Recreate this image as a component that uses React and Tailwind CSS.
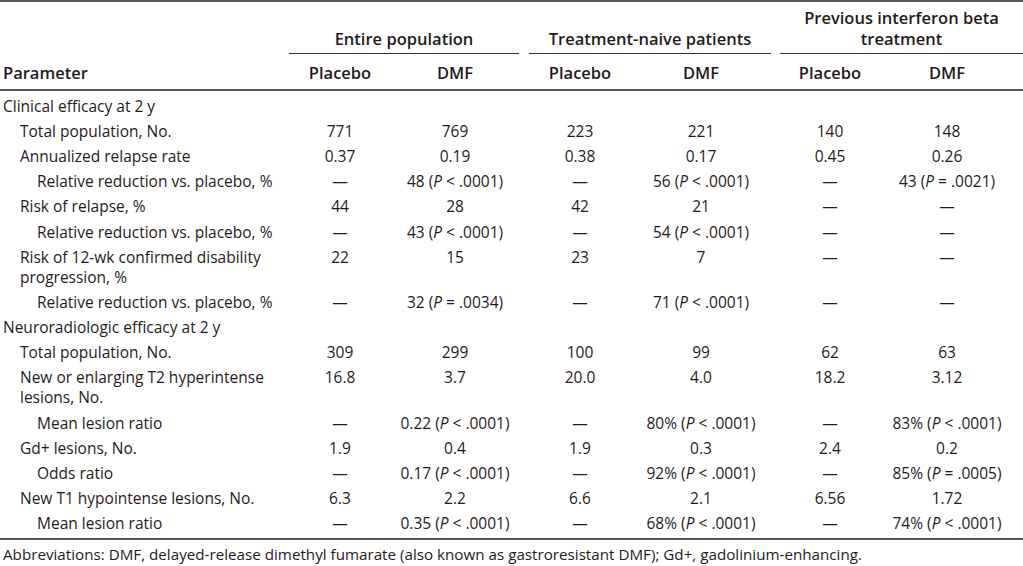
const cols = "grid grid-cols-[289px_102px_128px_10px_102px_140px_9px_100px_143px]"

const P = ({ op, v }) => (
  <>
    (<i>P</i> {op} {v})
  </>
)

const rows = [
  { lvl: 0, p: "Clinical efficacy at 2 y", c: [] },
  { lvl: 1, p: "Total population, No.", c: ["771", "769", "223", "221", "140", "148"] },
  { lvl: 1, p: "Annualized relapse rate", c: ["0.37", "0.19", "0.38", "0.17", "0.45", "0.26"] },
  {
    lvl: 2,
    p: "Relative reduction vs. placebo, %",
    c: ["—", <>48 <P op="<" v=".0001" /></>, "—", <>56 <P op="<" v=".0001" /></>, "—", <>43 <P op="=" v=".0021" /></>],
  },
  { lvl: 1, p: "Risk of relapse, %", c: ["44", "28", "42", "21", "—", "—"] },
  {
    lvl: 2,
    p: "Relative reduction vs. placebo, %",
    c: ["—", <>43 <P op="<" v=".0001" /></>, "—", <>54 <P op="<" v=".0001" /></>, "—", "—"],
  },
  {
    lvl: 1,
    p: <>Risk of 12-wk confirmed disability<br />progression, %</>,
    c: ["22", "15", "23", "7", "—", "—"],
  },
  {
    lvl: 2,
    p: "Relative reduction vs. placebo, %",
    c: ["—", <>32 <P op="=" v=".0034" /></>, "—", <>71 <P op="<" v=".0001" /></>, "—", "—"],
  },
  { lvl: 0, p: "Neuroradiologic efficacy at 2 y", c: [] },
  { lvl: 1, p: "Total population, No.", c: ["309", "299", "100", "99", "62", "63"] },
  {
    lvl: 1,
    p: <>New or enlarging T2 hyperintense<br />lesions, No.</>,
    c: ["16.8", "3.7", "20.0", "4.0", "18.2", "3.12"],
  },
  {
    lvl: 2,
    p: "Mean lesion ratio",
    c: ["—", <>0.22 <P op="<" v=".0001" /></>, "—", <>80% <P op="<" v=".0001" /></>, "—", <>83% <P op="<" v=".0001" /></>],
  },
  { lvl: 1, p: "Gd+ lesions, No.", c: ["1.9", "0.4", "1.9", "0.3", "2.4", "0.2"] },
  {
    lvl: 2,
    p: "Odds ratio",
    c: ["—", <>0.17 <P op="<" v=".0001" /></>, "—", <>92% <P op="<" v=".0001" /></>, "—", <>85% <P op="=" v=".0005" /></>],
  },
  { lvl: 1, p: "New T1 hypointense lesions, No.", c: ["6.3", "2.2", "6.6", "2.1", "6.56", "1.72"] },
  {
    lvl: 2,
    p: "Mean lesion ratio",
    c: ["—", <>0.35 <P op="<" v=".0001" /></>, "—", <>68% <P op="<" v=".0001" /></>, "—", <>74% <P op="<" v=".0001" /></>],
  },
]

const indent = ["pl-[3px]", "pl-[20px]", "pl-[37px]"]

const Row = ({ r }) => {
  const c = r.c
  const cell = "py-[2.6px] text-center whitespace-nowrap"
  return (
    <div className={cols}>
      <div className={`py-[2.6px] ${indent[r.lvl]}`}>{r.p}</div>
      <div className={cell}>{c[0]}</div>
      <div className={cell}>{c[1]}</div>
      <div />
      <div className={cell}>{c[2]}</div>
      <div className={cell}>{c[3]}</div>
      <div />
      <div className={cell}>{c[4]}</div>
      <div className={`${cell} pr-[9px]`}>{c[5]}</div>
    </div>
  )
}

export default function App() {
  const head = "pt-[9px] pb-[6px] text-center"
  return (
    <div className="w-[1023px] h-[566px] bg-white text-[#1f1b1c] text-[15.5px] leading-[20px] font-['Open_Sans','Noto_Sans',sans-serif]">
      <div className="border-t-2 border-[#555]">
        {/* column headings */}
        <div className={`${cols} border-b-2 border-[#555] text-[16.5px] font-semibold`}>
          <div className="col-start-2 col-span-2 self-end text-center pt-[7px] pb-[4px] border-b border-[#333]">
            Entire population
          </div>
          <div className="col-start-5 col-span-2 self-end text-center pb-[4px] border-b border-[#333]">
            Treatment-naive patients
          </div>
          <div className="col-start-8 col-span-2 self-end text-center leading-[21px] pt-[5px] pb-[4px] border-b border-[#333]">
            Previous interferon beta<br />treatment
          </div>
          <div className="col-start-1 pl-[3px] pt-[9px] pb-[6px]">Parameter</div>
          <div className={head}>Placebo</div>
          <div className={head}>DMF</div>
          <div />
          <div className={head}>Placebo</div>
          <div className={head}>DMF</div>
          <div />
          <div className={head}>Placebo</div>
          <div className={`${head} pr-[9px]`}>DMF</div>
        </div>

        <div className="pt-[2px] pb-[2px] border-b-2 border-[#555]">
          {rows.map((r, i) => (
            <Row key={i} r={r} />
          ))}
        </div>

        <p className="pl-[3px] pt-[4px] text-[15.2px]">
          Abbreviations: DMF, delayed-release dimethyl fumarate (also known as gastroresistant DMF); Gd+, gadolinium-enhancing.
        </p>
      </div>
    </div>
  )
}
